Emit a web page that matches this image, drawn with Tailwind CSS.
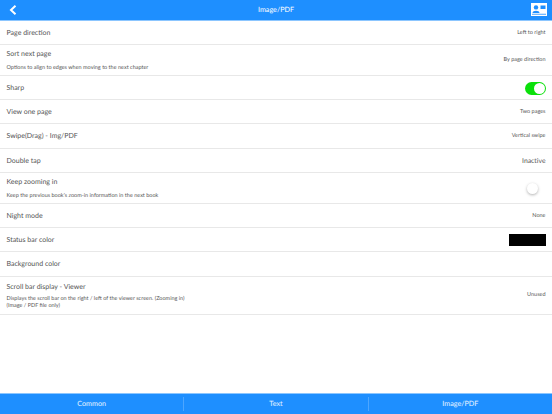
<!DOCTYPE html>
<html>
<head>
<meta charset="utf-8">
<script src="https://cdn.jsdelivr.net/npm/@tailwindcss/browser@4"></script>
</head>
<body class="m-0 bg-white">
<div class="w-[552px] h-[414px] flex flex-col overflow-hidden bg-white font-['Lato','Noto_Sans',sans-serif] text-[#555] [text-rendering:geometricPrecision]">
  <header class="h-[21px] shrink-0 bg-[#1e8fff] border-b border-[#8cc6ff] flex items-center justify-between pl-[9px] pr-[5px] relative">
    <svg class="w-[8px] h-[10px]" viewBox="0 0 8 10"><path d="M6.5 0.8 L2 5 L6.5 9.2" fill="none" stroke="#fff" stroke-width="2"/></svg>
    <span class="absolute left-0 right-0 text-center text-[7.2px] text-white">Image/PDF</span>
    <svg class="w-[16px] h-[13px] mb-[1px]" viewBox="0 0 16 13">
      <rect width="16" height="13" fill="#fff"/>
      <circle cx="5" cy="4.4" r="2.2" fill="#1e8fff"/>
      <path d="M1.5 10 C1.5 7 8.5 7 8.5 10 Z" fill="#1e8fff"/>
      <rect x="9.5" y="2.5" width="5" height="3.5" fill="#1e8fff"/>
      <rect x="1" y="10.8" width="14" height="0.8" fill="#1e8fff"/>
    </svg>
  </header>
  <main class="flex-1 flex flex-col">
    <div class="h-[24px] pt-[1px] flex items-center justify-between px-[6.5px] border-b border-[#e8e8e8]"><span class="text-[7px]">Page direction</span><span class="text-[5.5px]">Left to right</span></div>
    <div class="h-[31px] flex items-center justify-between px-[6.5px] border-b border-[#e8e8e8]">
      <div class="flex flex-col gap-[6px] mt-[1px]"><span class="text-[7px] leading-[10px]">Sort next page</span><span class="text-[5.5px] leading-[7px]">Options to align to edges when moving to the next chapter</span></div>
      <span class="text-[5.5px]">By page direction</span>
    </div>
    <div class="h-[24px] pt-[1px] flex items-center justify-between pl-[6.5px] pr-[6px] border-b border-[#e8e8e8]"><span class="text-[7px]">Sharp</span>
      <span class="w-[21px] h-[13px] rounded-full bg-[#0be00b] flex justify-end items-center pr-[1px]"><span class="w-[11px] h-[11px] rounded-full bg-white"></span></span></div>
    <div class="h-[24px] pt-[1px] flex items-center justify-between px-[6.5px] border-b border-[#e8e8e8]"><span class="text-[7px]">View one page</span><span class="text-[5.5px]">Two pages</span></div>
    <div class="h-[25px] pt-[1px] flex items-center justify-between px-[6.5px] border-b border-[#e8e8e8]"><span class="text-[7px]">Swipe(Drag) - Img/PDF</span><span class="text-[5.5px]">Vertical swipe</span></div>
    <div class="h-[24px] pt-[1px] flex items-center justify-between px-[6.5px] border-b border-[#e8e8e8]"><span class="text-[7px]">Double tap</span><span class="text-[6.8px]">Inactive</span></div>
    <div class="h-[31px] flex items-center justify-between pl-[6.5px] pr-[14.5px] border-b border-[#e8e8e8]">
      <div class="flex flex-col gap-[6px] mt-[1px]"><span class="text-[7px] leading-[10px]">Keep zooming in</span><span class="text-[5.5px] leading-[7px]">Keep the previous book's zoom-in information in the next book</span></div>
      <span class="w-[11px] h-[11px] mt-[1px] rounded-full bg-white shadow-[0_1px_3px_rgba(0,0,0,0.3)]"></span>
    </div>
    <div class="h-[24px] pt-[1px] flex items-center justify-between px-[6.5px] border-b border-[#e8e8e8]"><span class="text-[7px]">Night mode</span><span class="text-[5.5px]">None</span></div>
    <div class="h-[24px] pt-[1px] flex items-center justify-between pl-[6.5px] pr-[6px] border-b border-[#e8e8e8]"><span class="text-[7px]">Status bar color</span><span class="w-[37px] h-[12px] bg-black"></span></div>
    <div class="h-[25px] pt-[1px] flex items-center px-[6.5px] border-b border-[#e8e8e8]"><span class="text-[7px]">Background color</span></div>
    <div class="h-[38px] flex items-center justify-between px-[6.5px] border-b border-[#e8e8e8]">
      <div class="flex flex-col gap-[4.5px] mt-[1px]"><span class="text-[7px] leading-[10px]">Scroll bar display - Viewer</span><span class="text-[5.5px] leading-[7px]">Displays the scroll bar on the right / left of the viewer screen. (Zooming in)<br>(Image / PDF file only)</span></div>
      <span class="text-[5.5px]">Unused</span>
    </div>
  </main>
  <nav class="h-[21px] shrink-0 bg-[#1e8fff] border-t border-[#8cc6ff] flex items-center text-white/90 text-[7.2px]">
    <div class="flex-1 flex justify-center items-center h-[14px] border-r border-[#4da6ff]">Common</div>
    <div class="flex-1 flex justify-center items-center h-[14px] border-r border-[#4da6ff]">Text</div>
    <div class="flex-1 flex justify-center items-center h-[14px]">Image/PDF</div>
  </nav>
</div>
</body>
</html>
